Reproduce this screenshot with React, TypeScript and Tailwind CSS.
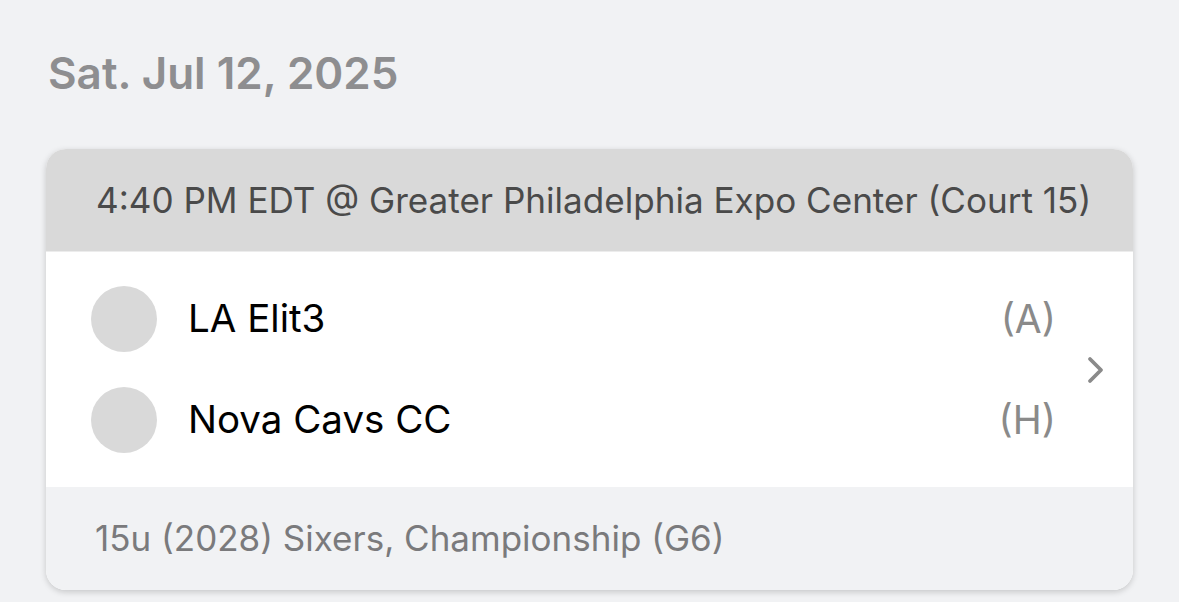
const teams = [
  { name: 'LA Elit3', side: '(A)' },
  { name: 'Nova Cavs CC', side: '(H)' },
]

export default function App() {
  return (
    <div className="min-h-[602px] bg-[#f1f2f4] pt-[51px] pl-[46px] pr-[46px] font-['Inter',sans-serif]">
      {/* Date */}
      <h1 className="pl-[2px] text-[44px] leading-[44px] font-semibold text-[#8e8e90]">
        Sat. Jul 12, 2025
      </h1>

      {/* Game card */}
      <div className="mt-[54px] rounded-[20px] overflow-hidden shadow-[0_2px_6px_rgba(0,0,0,0.18)] bg-white">
        <div className="h-[103px] bg-[#d9d9d9] flex items-center pl-[50px] border-b border-[#ececec]">
          <span className="text-[35.1px] text-[#4a4a4a] whitespace-nowrap">
            4:40 PM EDT @ Greater Philadelphia Expo Center (Court 15)
          </span>
        </div>

        <div className="flex items-center bg-white">
          <div className="flex-1 flex flex-col gap-[35px] py-[34px] pl-[45px]">
            {teams.map((team) => (
              <div key={team.name} className="flex items-center h-[66px]">
                <div className="w-[66px] h-[66px] rounded-full bg-[#d9d9d9]" />
                <span className="ml-[31px] flex-1 text-[38.5px] text-black">{team.name}</span>
                <span className="text-[39px] text-[#8a8a8a]">{team.side}</span>
              </div>
            ))}
          </div>
          <div className="w-[77px] flex items-center justify-center">
            <svg width="18" height="28" viewBox="0 0 18 28" fill="none">
              <polyline
                points="4,3 15,14 4,25"
                stroke="#8a8a8a"
                strokeWidth="3.8"
                strokeLinecap="round"
                strokeLinejoin="round"
              />
            </svg>
          </div>
        </div>

        <div className="h-[103px] bg-[#f1f2f4] flex items-center pl-[49px]">
          <span className="text-[35px] text-[#7a7a7c] whitespace-nowrap">
            15u (2028) Sixers, Championship (G6)
          </span>
        </div>
      </div>
    </div>
  )
}
